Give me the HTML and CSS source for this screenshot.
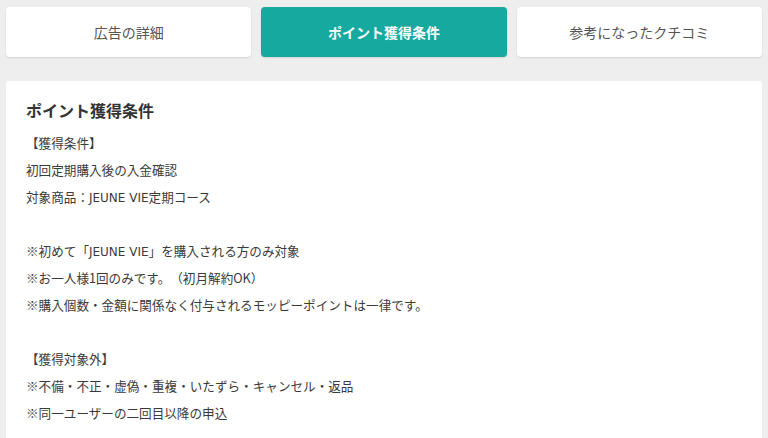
FILE: index.html
```html
<!DOCTYPE html>
<html lang="ja">
<head>
<meta charset="utf-8">
<link rel="stylesheet" href="styles.css">
</head>
<body>
<div class="page">
  <nav class="tabs">
    <div class="tab">広告の詳細</div>
    <div class="tab active">ポイント獲得条件</div>
    <div class="tab">参考になったクチコミ</div>
  </nav>
  <section class="card">
    <h2 class="title">ポイント獲得条件</h2>
    <div class="body">
      <p>【獲得条件】</p>
      <p>初回定期購入後の入金確認</p>
      <p>対象商品：<span class="en">JEUNE VIE</span>定期コース</p>
      <p class="blank">&nbsp;</p>
      <p>※初めて「<span class="en">JEUNE VIE</span>」を購入される方のみ対象</p>
      <p>※お一人様1回のみです。（初月解約OK）</p>
      <p>※購入個数・金額に関係なく付与されるモッピーポイントは一律です。</p>
      <p class="blank">&nbsp;</p>
      <p>【獲得対象外】</p>
      <p>※不備・不正・虚偽・重複・いたずら・キャンセル・返品</p>
      <p>※同一ユーザーの二回目以降の申込</p>
    </div>
  </section>
</div>
</body>
</html>
```
FILE: styles.css
```css
html, body {
  margin: 0;
  padding: 0;
  background: #eeeeee;
  font-family: "Noto Sans CJK JP", "Noto Sans", sans-serif;
  color: #333;
}
.page {
  padding: 7px 6px 0 6px;
  height: 431px;
  overflow: hidden;
}
.tabs {
  display: flex;
  gap: 10px;
}
.tab {
  flex: 1;
  height: 50px;
  display: flex;
  align-items: center;
  justify-content: center;
  background: #fff;
  border-radius: 4px;
  box-shadow: 0 1px 2px rgba(0,0,0,0.12);
  font-size: 14px;
  color: #555;
}
.tab.active {
  background: #16a99f;
  color: #fff;
  font-weight: bold;
}
.card {
  margin-top: 24px;
  background: #fff;
  border-radius: 3px;
  padding: 18px 20px 20px 20px;
}
.title {
  margin: 0 0 8px 0;
  font-size: 16px;
  line-height: 22px;
  font-weight: bold;
  color: #333;
}
.body p {
  margin: 0;
  font-size: 12.6px;
  line-height: 27px;
  height: 27px;
  color: #3a3a3a;
  text-spacing-trim: space-all;
}
.en {
  font-family: "DejaVu Sans", sans-serif;
  font-size: 12px;
  line-height: 1;
}
```
